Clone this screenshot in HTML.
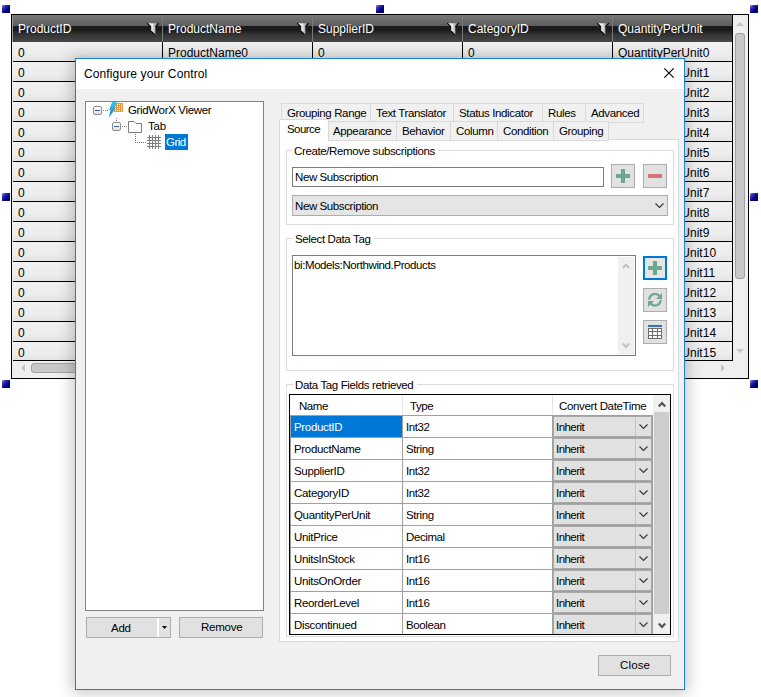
<!DOCTYPE html><html><head><meta charset="utf-8"><style>
*{box-sizing:border-box;margin:0;padding:0}
html,body{width:761px;height:697px;overflow:hidden;background:#fff;font-family:"Liberation Sans",sans-serif}
body{position:relative}
.a{position:absolute}
.t{position:absolute;white-space:pre;line-height:1.15}
.h{position:absolute;width:8px;height:8px;background:linear-gradient(135deg,#a8a8ec 0%,#3838b0 25%,#00008a 60%,#000068 100%)}
svg{position:absolute;overflow:visible}
</style></head><body>
<div class="h" style="left:2px;top:5px"></div>
<div class="h" style="left:376px;top:5px"></div>
<div class="h" style="left:750px;top:5px"></div>
<div class="h" style="left:2px;top:193px"></div>
<div class="h" style="left:750px;top:193px"></div>
<div class="h" style="left:2px;top:380px"></div>
<div class="h" style="left:750px;top:380px"></div>
<div class="a" style="left:11px;top:14px;width:738px;height:365px;border:1px solid #000;background:#efefef"></div>
<div class="a" style="left:12px;top:15px;width:720px;height:27px;background:linear-gradient(#787878 0%,#5e5e5e 39%,#1c1c1c 41%,#1a1a1a 55%,#363636 75%,#474747 100%)"></div>
<div class="a" style="left:162px;top:15px;width:1px;height:27px;background:#7a7a7a"></div>
<div class="a" style="left:312px;top:15px;width:1px;height:27px;background:#7a7a7a"></div>
<div class="a" style="left:462px;top:15px;width:1px;height:27px;background:#7a7a7a"></div>
<div class="a" style="left:612px;top:15px;width:1px;height:27px;background:#7a7a7a"></div>
<div class="a" style="left:732px;top:15px;width:1px;height:346px;background:#000"></div>
<div class="a" style="left:12px;top:15px;width:1px;height:27px;background:#9a9a9a"></div>
<div class="t" style="left:18px;top:23px;font-size:12px;color:#fff;">ProductID</div>
<div class="t" style="left:168px;top:23px;font-size:12px;color:#fff;">ProductName</div>
<div class="t" style="left:318px;top:23px;font-size:12px;color:#fff;">SupplierID</div>
<div class="t" style="left:468px;top:23px;font-size:12px;color:#fff;">CategoryID</div>
<div class="t" style="left:618px;top:23px;font-size:12px;color:#fff;">QuantityPerUnit</div>
<svg style="left:147px;top:22px" width="13" height="14" viewBox="0 0 13 14"><defs><linearGradient id="fg" x1="0" x2="1"><stop offset="0" stop-color="#fff"/><stop offset="0.45" stop-color="#e8e8e8"/><stop offset="1" stop-color="#6a6a6a"/></linearGradient></defs><path d="M0.8 1.2 L11.2 1.2 L8.4 4.6 L8.4 12.6 L7.6 12.6 L4.2 9.2 L4.2 4.6 Z" fill="url(#fg)"/><path d="M0.2 1.2 L3.8 4.7 M11.8 1.2 L8.4 4.7 M4.2 9.2 L7.7 12.7" stroke="#000" stroke-width="1.1" fill="none"/></svg>
<svg style="left:297px;top:22px" width="13" height="14" viewBox="0 0 13 14"><defs><linearGradient id="fg" x1="0" x2="1"><stop offset="0" stop-color="#fff"/><stop offset="0.45" stop-color="#e8e8e8"/><stop offset="1" stop-color="#6a6a6a"/></linearGradient></defs><path d="M0.8 1.2 L11.2 1.2 L8.4 4.6 L8.4 12.6 L7.6 12.6 L4.2 9.2 L4.2 4.6 Z" fill="url(#fg)"/><path d="M0.2 1.2 L3.8 4.7 M11.8 1.2 L8.4 4.7 M4.2 9.2 L7.7 12.7" stroke="#000" stroke-width="1.1" fill="none"/></svg>
<svg style="left:447px;top:22px" width="13" height="14" viewBox="0 0 13 14"><defs><linearGradient id="fg" x1="0" x2="1"><stop offset="0" stop-color="#fff"/><stop offset="0.45" stop-color="#e8e8e8"/><stop offset="1" stop-color="#6a6a6a"/></linearGradient></defs><path d="M0.8 1.2 L11.2 1.2 L8.4 4.6 L8.4 12.6 L7.6 12.6 L4.2 9.2 L4.2 4.6 Z" fill="url(#fg)"/><path d="M0.2 1.2 L3.8 4.7 M11.8 1.2 L8.4 4.7 M4.2 9.2 L7.7 12.7" stroke="#000" stroke-width="1.1" fill="none"/></svg>
<svg style="left:597px;top:22px" width="13" height="14" viewBox="0 0 13 14"><defs><linearGradient id="fg" x1="0" x2="1"><stop offset="0" stop-color="#fff"/><stop offset="0.45" stop-color="#e8e8e8"/><stop offset="1" stop-color="#6a6a6a"/></linearGradient></defs><path d="M0.8 1.2 L11.2 1.2 L8.4 4.6 L8.4 12.6 L7.6 12.6 L4.2 9.2 L4.2 4.6 Z" fill="url(#fg)"/><path d="M0.2 1.2 L3.8 4.7 M11.8 1.2 L8.4 4.7 M4.2 9.2 L7.7 12.7" stroke="#000" stroke-width="1.1" fill="none"/></svg>
<div class="a" style="left:12px;top:42px;width:720px;height:19px;background:linear-gradient(#f1f1f1 0%,#ededed 60%,#e4e4e4 100%)"></div>
<div class="a" style="left:13px;top:61px;width:719px;height:1px;background:#000"></div>
<div class="a" style="left:162px;top:42px;width:1px;height:20px;background:#000"></div>
<div class="a" style="left:312px;top:42px;width:1px;height:20px;background:#000"></div>
<div class="a" style="left:462px;top:42px;width:1px;height:20px;background:#000"></div>
<div class="a" style="left:612px;top:42px;width:1px;height:20px;background:#000"></div>
<div class="t" style="left:18px;top:47px;font-size:12px;color:#000;">0</div>
<div class="t" style="left:168px;top:47px;font-size:12px;color:#000;">ProductName0</div>
<div class="t" style="left:318px;top:47px;font-size:12px;color:#000;">0</div>
<div class="t" style="left:468px;top:47px;font-size:12px;color:#000;">0</div>
<div class="t" style="left:618px;top:47px;font-size:12px;color:#000;">QuantityPerUnit0</div>
<div class="a" style="left:12px;top:62px;width:720px;height:19px;background:linear-gradient(#f1f1f1 0%,#ededed 60%,#e4e4e4 100%)"></div>
<div class="a" style="left:13px;top:81px;width:719px;height:1px;background:#000"></div>
<div class="a" style="left:162px;top:62px;width:1px;height:20px;background:#000"></div>
<div class="a" style="left:312px;top:62px;width:1px;height:20px;background:#000"></div>
<div class="a" style="left:462px;top:62px;width:1px;height:20px;background:#000"></div>
<div class="a" style="left:612px;top:62px;width:1px;height:20px;background:#000"></div>
<div class="t" style="left:18px;top:67px;font-size:12px;color:#000;">0</div>
<div class="t" style="left:168px;top:67px;font-size:12px;color:#000;">ProductName1</div>
<div class="t" style="left:318px;top:67px;font-size:12px;color:#000;">0</div>
<div class="t" style="left:468px;top:67px;font-size:12px;color:#000;">0</div>
<div class="t" style="left:618px;top:67px;font-size:12px;color:#000;">QuantityPerUnit1</div>
<div class="a" style="left:12px;top:82px;width:720px;height:19px;background:linear-gradient(#f1f1f1 0%,#ededed 60%,#e4e4e4 100%)"></div>
<div class="a" style="left:13px;top:101px;width:719px;height:1px;background:#000"></div>
<div class="a" style="left:162px;top:82px;width:1px;height:20px;background:#000"></div>
<div class="a" style="left:312px;top:82px;width:1px;height:20px;background:#000"></div>
<div class="a" style="left:462px;top:82px;width:1px;height:20px;background:#000"></div>
<div class="a" style="left:612px;top:82px;width:1px;height:20px;background:#000"></div>
<div class="t" style="left:18px;top:87px;font-size:12px;color:#000;">0</div>
<div class="t" style="left:168px;top:87px;font-size:12px;color:#000;">ProductName2</div>
<div class="t" style="left:318px;top:87px;font-size:12px;color:#000;">0</div>
<div class="t" style="left:468px;top:87px;font-size:12px;color:#000;">0</div>
<div class="t" style="left:618px;top:87px;font-size:12px;color:#000;">QuantityPerUnit2</div>
<div class="a" style="left:12px;top:102px;width:720px;height:19px;background:linear-gradient(#f1f1f1 0%,#ededed 60%,#e4e4e4 100%)"></div>
<div class="a" style="left:13px;top:121px;width:719px;height:1px;background:#000"></div>
<div class="a" style="left:162px;top:102px;width:1px;height:20px;background:#000"></div>
<div class="a" style="left:312px;top:102px;width:1px;height:20px;background:#000"></div>
<div class="a" style="left:462px;top:102px;width:1px;height:20px;background:#000"></div>
<div class="a" style="left:612px;top:102px;width:1px;height:20px;background:#000"></div>
<div class="t" style="left:18px;top:107px;font-size:12px;color:#000;">0</div>
<div class="t" style="left:168px;top:107px;font-size:12px;color:#000;">ProductName3</div>
<div class="t" style="left:318px;top:107px;font-size:12px;color:#000;">0</div>
<div class="t" style="left:468px;top:107px;font-size:12px;color:#000;">0</div>
<div class="t" style="left:618px;top:107px;font-size:12px;color:#000;">QuantityPerUnit3</div>
<div class="a" style="left:12px;top:122px;width:720px;height:19px;background:linear-gradient(#f1f1f1 0%,#ededed 60%,#e4e4e4 100%)"></div>
<div class="a" style="left:13px;top:141px;width:719px;height:1px;background:#000"></div>
<div class="a" style="left:162px;top:122px;width:1px;height:20px;background:#000"></div>
<div class="a" style="left:312px;top:122px;width:1px;height:20px;background:#000"></div>
<div class="a" style="left:462px;top:122px;width:1px;height:20px;background:#000"></div>
<div class="a" style="left:612px;top:122px;width:1px;height:20px;background:#000"></div>
<div class="t" style="left:18px;top:127px;font-size:12px;color:#000;">0</div>
<div class="t" style="left:168px;top:127px;font-size:12px;color:#000;">ProductName4</div>
<div class="t" style="left:318px;top:127px;font-size:12px;color:#000;">0</div>
<div class="t" style="left:468px;top:127px;font-size:12px;color:#000;">0</div>
<div class="t" style="left:618px;top:127px;font-size:12px;color:#000;">QuantityPerUnit4</div>
<div class="a" style="left:12px;top:142px;width:720px;height:19px;background:linear-gradient(#f1f1f1 0%,#ededed 60%,#e4e4e4 100%)"></div>
<div class="a" style="left:13px;top:161px;width:719px;height:1px;background:#000"></div>
<div class="a" style="left:162px;top:142px;width:1px;height:20px;background:#000"></div>
<div class="a" style="left:312px;top:142px;width:1px;height:20px;background:#000"></div>
<div class="a" style="left:462px;top:142px;width:1px;height:20px;background:#000"></div>
<div class="a" style="left:612px;top:142px;width:1px;height:20px;background:#000"></div>
<div class="t" style="left:18px;top:147px;font-size:12px;color:#000;">0</div>
<div class="t" style="left:168px;top:147px;font-size:12px;color:#000;">ProductName5</div>
<div class="t" style="left:318px;top:147px;font-size:12px;color:#000;">0</div>
<div class="t" style="left:468px;top:147px;font-size:12px;color:#000;">0</div>
<div class="t" style="left:618px;top:147px;font-size:12px;color:#000;">QuantityPerUnit5</div>
<div class="a" style="left:12px;top:162px;width:720px;height:19px;background:linear-gradient(#f1f1f1 0%,#ededed 60%,#e4e4e4 100%)"></div>
<div class="a" style="left:13px;top:181px;width:719px;height:1px;background:#000"></div>
<div class="a" style="left:162px;top:162px;width:1px;height:20px;background:#000"></div>
<div class="a" style="left:312px;top:162px;width:1px;height:20px;background:#000"></div>
<div class="a" style="left:462px;top:162px;width:1px;height:20px;background:#000"></div>
<div class="a" style="left:612px;top:162px;width:1px;height:20px;background:#000"></div>
<div class="t" style="left:18px;top:167px;font-size:12px;color:#000;">0</div>
<div class="t" style="left:168px;top:167px;font-size:12px;color:#000;">ProductName6</div>
<div class="t" style="left:318px;top:167px;font-size:12px;color:#000;">0</div>
<div class="t" style="left:468px;top:167px;font-size:12px;color:#000;">0</div>
<div class="t" style="left:618px;top:167px;font-size:12px;color:#000;">QuantityPerUnit6</div>
<div class="a" style="left:12px;top:182px;width:720px;height:19px;background:linear-gradient(#f1f1f1 0%,#ededed 60%,#e4e4e4 100%)"></div>
<div class="a" style="left:13px;top:201px;width:719px;height:1px;background:#000"></div>
<div class="a" style="left:162px;top:182px;width:1px;height:20px;background:#000"></div>
<div class="a" style="left:312px;top:182px;width:1px;height:20px;background:#000"></div>
<div class="a" style="left:462px;top:182px;width:1px;height:20px;background:#000"></div>
<div class="a" style="left:612px;top:182px;width:1px;height:20px;background:#000"></div>
<div class="t" style="left:18px;top:187px;font-size:12px;color:#000;">0</div>
<div class="t" style="left:168px;top:187px;font-size:12px;color:#000;">ProductName7</div>
<div class="t" style="left:318px;top:187px;font-size:12px;color:#000;">0</div>
<div class="t" style="left:468px;top:187px;font-size:12px;color:#000;">0</div>
<div class="t" style="left:618px;top:187px;font-size:12px;color:#000;">QuantityPerUnit7</div>
<div class="a" style="left:12px;top:202px;width:720px;height:19px;background:linear-gradient(#f1f1f1 0%,#ededed 60%,#e4e4e4 100%)"></div>
<div class="a" style="left:13px;top:221px;width:719px;height:1px;background:#000"></div>
<div class="a" style="left:162px;top:202px;width:1px;height:20px;background:#000"></div>
<div class="a" style="left:312px;top:202px;width:1px;height:20px;background:#000"></div>
<div class="a" style="left:462px;top:202px;width:1px;height:20px;background:#000"></div>
<div class="a" style="left:612px;top:202px;width:1px;height:20px;background:#000"></div>
<div class="t" style="left:18px;top:207px;font-size:12px;color:#000;">0</div>
<div class="t" style="left:168px;top:207px;font-size:12px;color:#000;">ProductName8</div>
<div class="t" style="left:318px;top:207px;font-size:12px;color:#000;">0</div>
<div class="t" style="left:468px;top:207px;font-size:12px;color:#000;">0</div>
<div class="t" style="left:618px;top:207px;font-size:12px;color:#000;">QuantityPerUnit8</div>
<div class="a" style="left:12px;top:222px;width:720px;height:19px;background:linear-gradient(#f1f1f1 0%,#ededed 60%,#e4e4e4 100%)"></div>
<div class="a" style="left:13px;top:241px;width:719px;height:1px;background:#000"></div>
<div class="a" style="left:162px;top:222px;width:1px;height:20px;background:#000"></div>
<div class="a" style="left:312px;top:222px;width:1px;height:20px;background:#000"></div>
<div class="a" style="left:462px;top:222px;width:1px;height:20px;background:#000"></div>
<div class="a" style="left:612px;top:222px;width:1px;height:20px;background:#000"></div>
<div class="t" style="left:18px;top:227px;font-size:12px;color:#000;">0</div>
<div class="t" style="left:168px;top:227px;font-size:12px;color:#000;">ProductName9</div>
<div class="t" style="left:318px;top:227px;font-size:12px;color:#000;">0</div>
<div class="t" style="left:468px;top:227px;font-size:12px;color:#000;">0</div>
<div class="t" style="left:618px;top:227px;font-size:12px;color:#000;">QuantityPerUnit9</div>
<div class="a" style="left:12px;top:242px;width:720px;height:19px;background:linear-gradient(#f1f1f1 0%,#ededed 60%,#e4e4e4 100%)"></div>
<div class="a" style="left:13px;top:261px;width:719px;height:1px;background:#000"></div>
<div class="a" style="left:162px;top:242px;width:1px;height:20px;background:#000"></div>
<div class="a" style="left:312px;top:242px;width:1px;height:20px;background:#000"></div>
<div class="a" style="left:462px;top:242px;width:1px;height:20px;background:#000"></div>
<div class="a" style="left:612px;top:242px;width:1px;height:20px;background:#000"></div>
<div class="t" style="left:18px;top:247px;font-size:12px;color:#000;">0</div>
<div class="t" style="left:168px;top:247px;font-size:12px;color:#000;">ProductName10</div>
<div class="t" style="left:318px;top:247px;font-size:12px;color:#000;">0</div>
<div class="t" style="left:468px;top:247px;font-size:12px;color:#000;">0</div>
<div class="t" style="left:618px;top:247px;font-size:12px;color:#000;">QuantityPerUnit10</div>
<div class="a" style="left:12px;top:262px;width:720px;height:19px;background:linear-gradient(#f1f1f1 0%,#ededed 60%,#e4e4e4 100%)"></div>
<div class="a" style="left:13px;top:281px;width:719px;height:1px;background:#000"></div>
<div class="a" style="left:162px;top:262px;width:1px;height:20px;background:#000"></div>
<div class="a" style="left:312px;top:262px;width:1px;height:20px;background:#000"></div>
<div class="a" style="left:462px;top:262px;width:1px;height:20px;background:#000"></div>
<div class="a" style="left:612px;top:262px;width:1px;height:20px;background:#000"></div>
<div class="t" style="left:18px;top:267px;font-size:12px;color:#000;">0</div>
<div class="t" style="left:168px;top:267px;font-size:12px;color:#000;">ProductName11</div>
<div class="t" style="left:318px;top:267px;font-size:12px;color:#000;">0</div>
<div class="t" style="left:468px;top:267px;font-size:12px;color:#000;">0</div>
<div class="t" style="left:618px;top:267px;font-size:12px;color:#000;">QuantityPerUnit11</div>
<div class="a" style="left:12px;top:282px;width:720px;height:19px;background:linear-gradient(#f1f1f1 0%,#ededed 60%,#e4e4e4 100%)"></div>
<div class="a" style="left:13px;top:301px;width:719px;height:1px;background:#000"></div>
<div class="a" style="left:162px;top:282px;width:1px;height:20px;background:#000"></div>
<div class="a" style="left:312px;top:282px;width:1px;height:20px;background:#000"></div>
<div class="a" style="left:462px;top:282px;width:1px;height:20px;background:#000"></div>
<div class="a" style="left:612px;top:282px;width:1px;height:20px;background:#000"></div>
<div class="t" style="left:18px;top:287px;font-size:12px;color:#000;">0</div>
<div class="t" style="left:168px;top:287px;font-size:12px;color:#000;">ProductName12</div>
<div class="t" style="left:318px;top:287px;font-size:12px;color:#000;">0</div>
<div class="t" style="left:468px;top:287px;font-size:12px;color:#000;">0</div>
<div class="t" style="left:618px;top:287px;font-size:12px;color:#000;">QuantityPerUnit12</div>
<div class="a" style="left:12px;top:302px;width:720px;height:19px;background:linear-gradient(#f1f1f1 0%,#ededed 60%,#e4e4e4 100%)"></div>
<div class="a" style="left:13px;top:321px;width:719px;height:1px;background:#000"></div>
<div class="a" style="left:162px;top:302px;width:1px;height:20px;background:#000"></div>
<div class="a" style="left:312px;top:302px;width:1px;height:20px;background:#000"></div>
<div class="a" style="left:462px;top:302px;width:1px;height:20px;background:#000"></div>
<div class="a" style="left:612px;top:302px;width:1px;height:20px;background:#000"></div>
<div class="t" style="left:18px;top:307px;font-size:12px;color:#000;">0</div>
<div class="t" style="left:168px;top:307px;font-size:12px;color:#000;">ProductName13</div>
<div class="t" style="left:318px;top:307px;font-size:12px;color:#000;">0</div>
<div class="t" style="left:468px;top:307px;font-size:12px;color:#000;">0</div>
<div class="t" style="left:618px;top:307px;font-size:12px;color:#000;">QuantityPerUnit13</div>
<div class="a" style="left:12px;top:322px;width:720px;height:19px;background:linear-gradient(#f1f1f1 0%,#ededed 60%,#e4e4e4 100%)"></div>
<div class="a" style="left:13px;top:341px;width:719px;height:1px;background:#000"></div>
<div class="a" style="left:162px;top:322px;width:1px;height:20px;background:#000"></div>
<div class="a" style="left:312px;top:322px;width:1px;height:20px;background:#000"></div>
<div class="a" style="left:462px;top:322px;width:1px;height:20px;background:#000"></div>
<div class="a" style="left:612px;top:322px;width:1px;height:20px;background:#000"></div>
<div class="t" style="left:18px;top:327px;font-size:12px;color:#000;">0</div>
<div class="t" style="left:168px;top:327px;font-size:12px;color:#000;">ProductName14</div>
<div class="t" style="left:318px;top:327px;font-size:12px;color:#000;">0</div>
<div class="t" style="left:468px;top:327px;font-size:12px;color:#000;">0</div>
<div class="t" style="left:618px;top:327px;font-size:12px;color:#000;">QuantityPerUnit14</div>
<div class="a" style="left:12px;top:342px;width:720px;height:18px;background:linear-gradient(#f1f1f1 0%,#ededed 60%,#e4e4e4 100%)"></div>
<div class="a" style="left:13px;top:360px;width:719px;height:1px;background:#000"></div>
<div class="a" style="left:162px;top:342px;width:1px;height:19px;background:#000"></div>
<div class="a" style="left:312px;top:342px;width:1px;height:19px;background:#000"></div>
<div class="a" style="left:462px;top:342px;width:1px;height:19px;background:#000"></div>
<div class="a" style="left:612px;top:342px;width:1px;height:19px;background:#000"></div>
<div class="t" style="left:18px;top:347px;font-size:12px;color:#000;">0</div>
<div class="t" style="left:168px;top:347px;font-size:12px;color:#000;">ProductName15</div>
<div class="t" style="left:318px;top:347px;font-size:12px;color:#000;">0</div>
<div class="t" style="left:468px;top:347px;font-size:12px;color:#000;">0</div>
<div class="t" style="left:618px;top:347px;font-size:12px;color:#000;">QuantityPerUnit15</div>
<div class="a" style="left:733px;top:15px;width:15px;height:347px;background:#efefef"></div>
<svg style="left:736px;top:21px" width="8" height="5"><path d="M0 5 L4 1 L8 5 Z" fill="#c6c6c6"/></svg>
<div class="a" style="left:735px;top:33px;width:10px;height:246px;background:#c8c8c8;border:1px solid #a0a0a0;border-radius:3px"></div>
<svg style="left:736px;top:349px" width="8" height="5"><path d="M0 0 L4 4 L8 0 Z" fill="#c6c6c6"/></svg>
<div class="a" style="left:12px;top:361px;width:721px;height:17px;background:#efefef"></div>
<svg style="left:20px;top:364px" width="5" height="8"><path d="M5 0 L1 4 L5 8 Z" fill="#c6c6c6"/></svg>
<div class="a" style="left:31px;top:363px;width:600px;height:10px;background:#c8c8c8;border:1px solid #a0a0a0;border-radius:3px"></div>
<svg style="left:721px;top:364px" width="5" height="8"><path d="M0 0 L4 4 L0 8 Z" fill="#c6c6c6"/></svg>
<div class="a" style="left:733px;top:361px;width:15px;height:17px;background:#efefef"></div>
<div class="a" style="left:75px;top:59px;width:610px;height:631px;box-shadow:0 0 14px 3px rgba(0,0,0,0.22)"></div>
<div class="a" style="left:75px;top:58px;width:610px;height:632px;border:1px solid #1883d7;background:#f0f0f0"></div>
<div class="a" style="left:76px;top:59px;width:608px;height:30px;background:#fff"></div>
<div class="t" style="left:84px;top:68px;font-size:12px;color:#000;letter-spacing:0.12px;">Configure your Control</div>
<svg style="left:664px;top:68px" width="11" height="11"><path d="M0.3 0.3 L9.7 9.7 M9.7 0.3 L0.3 9.7" stroke="#000" stroke-width="1.15"/></svg>
<div class="a" style="left:85px;top:101px;width:179px;height:510px;border:1px solid #828282;background:#fff"></div>
<div class="a" style="left:93px;top:106px;width:9px;height:9px;border:1px solid #8e8f8f;border-radius:2px;background:linear-gradient(#fff,#f0f0f0 60%,#dcdcdc)"></div>
<div class="a" style="left:95px;top:110px;width:5px;height:1px;background:#3b5aa5"></div>
<div class="a" style="left:103px;top:110px;width:1px;height:1px;background:#7a7a7a"></div>
<div class="a" style="left:105px;top:110px;width:1px;height:1px;background:#7a7a7a"></div>
<div class="a" style="left:107px;top:110px;width:1px;height:1px;background:#7a7a7a"></div>
<svg style="left:108px;top:102px" width="16" height="16" viewBox="0 0 16 16"><rect x="6" y="1" width="9" height="9" fill="#e9973f"/><g fill="#fff"><rect x="7" y="2" width="1" height="1"/><rect x="9" y="2" width="1" height="1"/><rect x="11" y="2" width="1" height="1"/><rect x="13" y="2" width="1" height="1"/><rect x="7" y="4" width="1" height="1"/><rect x="9" y="4" width="1" height="1"/><rect x="11" y="4" width="1" height="1"/><rect x="13" y="4" width="1" height="1"/><rect x="7" y="6" width="1" height="1"/><rect x="9" y="6" width="1" height="1"/><rect x="11" y="6" width="1" height="1"/><rect x="13" y="6" width="1" height="1"/><rect x="7" y="8" width="1" height="1"/><rect x="9" y="8" width="1" height="1"/><rect x="11" y="8" width="1" height="1"/><rect x="13" y="8" width="1" height="1"/></g><defs><linearGradient id="lg" x1="0" y1="0" x2="0" y2="1"><stop offset="0" stop-color="#3cc8f5"/><stop offset="1" stop-color="#0a7fd0"/></linearGradient></defs><path d="M4 0 L9 0 L6.5 6.5 L7.5 6.5 L1 15.5 L2.5 8 L1.2 8 Z" fill="url(#lg)"/></svg>
<div class="t" style="left:128px;top:104px;font-size:11.5px;color:#000;letter-spacing:-0.35px;">GridWorX Viewer</div>
<div class="a" style="left:116px;top:118px;width:1px;height:1px;background:#7a7a7a"></div>
<div class="a" style="left:116px;top:120px;width:1px;height:1px;background:#7a7a7a"></div>
<div class="a" style="left:112px;top:122px;width:9px;height:9px;border:1px solid #8e8f8f;border-radius:2px;background:linear-gradient(#fff,#f0f0f0 60%,#dcdcdc)"></div>
<div class="a" style="left:114px;top:126px;width:5px;height:1px;background:#3b5aa5"></div>
<div class="a" style="left:122px;top:126px;width:1px;height:1px;background:#7a7a7a"></div>
<div class="a" style="left:124px;top:126px;width:1px;height:1px;background:#7a7a7a"></div>
<div class="a" style="left:126px;top:126px;width:1px;height:1px;background:#7a7a7a"></div>
<svg style="left:128px;top:121px" width="15" height="13" viewBox="0 0 15 13"><path d="M0.5 0.5 L6 0.5 L8 2.5 L13.5 2.5 L13.5 11.5 L0.5 11.5 Z" fill="#fff" stroke="#7a7a7a" stroke-width="1"/></svg>
<div class="t" style="left:148px;top:120px;font-size:11.5px;color:#000;letter-spacing:-0.25px;">Tab</div>
<div class="a" style="left:135px;top:134px;width:1px;height:1px;background:#7a7a7a"></div>
<div class="a" style="left:135px;top:136px;width:1px;height:1px;background:#7a7a7a"></div>
<div class="a" style="left:135px;top:138px;width:1px;height:1px;background:#7a7a7a"></div>
<div class="a" style="left:135px;top:140px;width:1px;height:1px;background:#7a7a7a"></div>
<div class="a" style="left:135px;top:142px;width:1px;height:1px;background:#7a7a7a"></div>
<div class="a" style="left:137px;top:142px;width:1px;height:1px;background:#7a7a7a"></div>
<div class="a" style="left:139px;top:142px;width:1px;height:1px;background:#7a7a7a"></div>
<div class="a" style="left:141px;top:142px;width:1px;height:1px;background:#7a7a7a"></div>
<div class="a" style="left:143px;top:142px;width:1px;height:1px;background:#7a7a7a"></div>
<div class="a" style="left:145px;top:142px;width:1px;height:1px;background:#7a7a7a"></div>
<svg style="left:147px;top:135px" width="14" height="14" viewBox="0 0 14 14"><g stroke="#7b7f7f" stroke-width="1"><path d="M2.5 0 V14 M5.5 0 V14 M8.5 0 V14 M11.5 0 V14"/><path d="M0 2.5 H14 M0 5.5 H14 M0 8.5 H14 M0 11.5 H14"/></g></svg>
<div class="a" style="left:165px;top:134px;width:23px;height:16px;background:#0078d7"></div>
<div class="t" style="left:166px;top:136px;font-size:11.5px;color:#fff;letter-spacing:-0.55px;">Grid</div>
<div class="a" style="left:86px;top:617px;width:85px;height:21px;border:1px solid #adadad;background:#e1e1e1"></div>
<div class="a" style="left:157px;top:618px;width:2px;height:19px;background:#fff"></div>
<svg style="left:162px;top:626px" width="5" height="3"><path d="M0 0 L5 0 L2.5 3 Z" fill="#000"/></svg>
<div class="t" style="left:111px;top:622px;font-size:11.5px;color:#000;letter-spacing:-0.25px;">Add</div>
<div class="a" style="left:179px;top:617px;width:84px;height:21px;border:1px solid #adadad;background:#e1e1e1"></div>
<div class="t" style="left:201px;top:621px;font-size:11.5px;color:#000;letter-spacing:-0.25px;">Remove</div>
<div class="a" style="left:281px;top:103px;width:90px;height:20px;border:1px solid #d9d9d9;background:#f0f0f0"></div>
<div class="t" style="left:287px;top:107px;font-size:11.5px;color:#000;letter-spacing:-0.37px;">Grouping Range</div>
<div class="a" style="left:370px;top:103px;width:84px;height:20px;border:1px solid #d9d9d9;background:#f0f0f0"></div>
<div class="t" style="left:376px;top:107px;font-size:11.5px;color:#000;letter-spacing:-0.37px;">Text Translator</div>
<div class="a" style="left:453px;top:103px;width:90px;height:20px;border:1px solid #d9d9d9;background:#f0f0f0"></div>
<div class="t" style="left:459px;top:107px;font-size:11.5px;color:#000;letter-spacing:-0.37px;">Status Indicator</div>
<div class="a" style="left:542px;top:103px;width:44px;height:20px;border:1px solid #d9d9d9;background:#f0f0f0"></div>
<div class="t" style="left:548px;top:107px;font-size:11.5px;color:#000;letter-spacing:-0.37px;">Rules</div>
<div class="a" style="left:585px;top:103px;width:59px;height:20px;border:1px solid #d9d9d9;background:#f0f0f0"></div>
<div class="t" style="left:591px;top:107px;font-size:11.5px;color:#000;letter-spacing:-0.37px;">Advanced</div>
<div class="a" style="left:279px;top:139px;width:400px;height:503px;border:1px solid #d9d9d9;background:#fff"></div>
<div class="a" style="left:328px;top:121px;width:69px;height:20px;border:1px solid #d9d9d9;background:#f0f0f0"></div>
<div class="t" style="left:333px;top:125px;font-size:11.5px;color:#000;letter-spacing:-0.37px;">Appearance</div>
<div class="a" style="left:396px;top:121px;width:55px;height:20px;border:1px solid #d9d9d9;background:#f0f0f0"></div>
<div class="t" style="left:402px;top:125px;font-size:11.5px;color:#000;letter-spacing:-0.37px;">Behavior</div>
<div class="a" style="left:450px;top:121px;width:48px;height:20px;border:1px solid #d9d9d9;background:#f0f0f0"></div>
<div class="t" style="left:456px;top:125px;font-size:11.5px;color:#000;letter-spacing:-0.37px;">Column</div>
<div class="a" style="left:497px;top:121px;width:57px;height:20px;border:1px solid #d9d9d9;background:#f0f0f0"></div>
<div class="t" style="left:503px;top:125px;font-size:11.5px;color:#000;letter-spacing:-0.37px;">Condition</div>
<div class="a" style="left:553px;top:121px;width:56px;height:20px;border:1px solid #d9d9d9;background:#f0f0f0"></div>
<div class="t" style="left:559px;top:125px;font-size:11.5px;color:#000;letter-spacing:-0.37px;">Grouping</div>
<div class="a" style="left:279px;top:119px;width:50px;height:22px;border:1px solid #d9d9d9;border-bottom:none;background:#fff"></div>
<div class="t" style="left:287px;top:123px;font-size:11.5px;color:#000;letter-spacing:-0.55px;">Source</div>
<div class="a" style="left:286px;top:150px;width:388px;height:75px;border:1px solid #dcdcdc"></div>
<div class="a" style="left:292px;top:148px;width:146px;height:4px;background:#fff"></div>
<div class="t" style="left:294px;top:145px;font-size:11.5px;color:#000;letter-spacing:-0.37px;">Create/Remove subscriptions</div>
<div class="a" style="left:292px;top:167px;width:312px;height:20px;border:1px solid #7a7a7a;background:#fff"></div>
<div class="t" style="left:295px;top:171px;font-size:11.5px;color:#000;letter-spacing:-0.4px;">New Subscription</div>
<div class="a" style="left:611px;top:164px;width:24px;height:24px;border:1px solid #adadad;background:#e1e1e1"></div>
<div class="a" style="left:616px;top:174px;width:14px;height:4px;background:#6aa98f"></div>
<div class="a" style="left:621px;top:169px;width:4px;height:14px;background:#6aa98f"></div>
<div class="a" style="left:643px;top:164px;width:24px;height:24px;border:1px solid #adadad;background:#e1e1e1"></div>
<div class="a" style="left:648px;top:174px;width:14px;height:4px;background:#d9727a"></div>
<div class="a" style="left:292px;top:195px;width:376px;height:21px;border:1px solid #adadad;background:#e5e5e5"></div>
<div class="t" style="left:295px;top:200px;font-size:11.5px;color:#000;letter-spacing:-0.4px;">New Subscription</div>
<svg style="left:655px;top:203px" width="9" height="6"><path d="M0.5 0.5 L4.5 4.5 L8.5 0.5" fill="none" stroke="#3a3a3a" stroke-width="1.2"/></svg>
<div class="a" style="left:286px;top:238px;width:388px;height:133px;border:1px solid #dcdcdc"></div>
<div class="a" style="left:293px;top:236px;width:81px;height:4px;background:#fff"></div>
<div class="t" style="left:295px;top:233px;font-size:11.5px;color:#000;letter-spacing:-0.37px;">Select Data Tag</div>
<div class="a" style="left:292px;top:255px;width:344px;height:101px;border:1px solid #7a7a7a;background:#fff"></div>
<div class="t" style="left:294px;top:259px;font-size:11.5px;color:#000;letter-spacing:-0.4px;">bi:Models:Northwind.Products</div>
<div class="a" style="left:618px;top:257px;width:16px;height:97px;background:#f0f0f0"></div>
<svg style="left:622px;top:262px" width="8" height="8"><path d="M0.8 6 L4 2.6 L7.2 6" fill="none" stroke="#c0c0c0" stroke-width="2"/></svg>
<svg style="left:622px;top:342px" width="8" height="8"><path d="M0.8 1.5 L4 5 L7.2 1.5" fill="none" stroke="#c0c0c0" stroke-width="2"/></svg>
<div class="a" style="left:643px;top:256px;width:24px;height:24px;border:2px solid #0078d7;background:#e5e5e5"></div>
<div class="a" style="left:648px;top:266px;width:14px;height:4px;background:#6aa98f"></div>
<div class="a" style="left:653px;top:261px;width:4px;height:14px;background:#6aa98f"></div>
<div class="a" style="left:643px;top:288px;width:24px;height:24px;border:1px solid #adadad;background:#e1e1e1"></div>
<svg style="left:647px;top:292px" width="16" height="16" viewBox="0 0 16 16"><g fill="none" stroke="#70a893" stroke-width="2.3"><path d="M2.3 7.9 A5.7 5.7 0 0 1 12.4 4.1"/><path d="M13.7 8.1 A5.7 5.7 0 0 1 3.6 11.4"/></g><path d="M15 1 L15 7 L9 7 Z" fill="#70a893"/><path d="M1 15 L1 9 L7 9 Z" fill="#70a893"/></svg>
<div class="a" style="left:643px;top:320px;width:24px;height:24px;border:1px solid #adadad;background:#e1e1e1"></div>
<div class="a" style="left:648px;top:325px;width:14px;height:2px;background:#3d6fb6"></div>
<div class="a" style="left:648px;top:328px;width:14px;height:11px;border:1px solid #6e6e6e;background:#fff"></div>
<div class="a" style="left:652px;top:328px;width:1px;height:11px;background:#6e6e6e"></div>
<div class="a" style="left:657px;top:328px;width:1px;height:11px;background:#6e6e6e"></div>
<div class="a" style="left:648px;top:331px;width:14px;height:1px;background:#6e6e6e"></div>
<div class="a" style="left:648px;top:335px;width:14px;height:1px;background:#6e6e6e"></div>
<div class="a" style="left:286px;top:384px;width:388px;height:253px;border:1px solid #dcdcdc"></div>
<div class="a" style="left:293px;top:382px;width:124px;height:4px;background:#fff"></div>
<div class="t" style="left:295px;top:379px;font-size:11.5px;color:#000;letter-spacing:-0.37px;">Data Tag Fields retrieved</div>
<div class="a" style="left:289px;top:394px;width:382px;height:241px;border:1px solid #000;background:#fff"></div>
<div class="a" style="left:290px;top:395px;width:363px;height:20px;background:#fff"></div>
<div class="a" style="left:402px;top:395px;width:1px;height:20px;background:#e5e5e5"></div>
<div class="a" style="left:552px;top:395px;width:1px;height:20px;background:#e5e5e5"></div>
<div class="t" style="left:299px;top:400px;font-size:11.5px;color:#000;letter-spacing:-0.45px;">Name</div>
<div class="t" style="left:410px;top:400px;font-size:11.5px;color:#000;letter-spacing:-0.45px;">Type</div>
<div class="t" style="left:559px;top:400px;font-size:11.5px;color:#000;letter-spacing:-0.35px;">Convert DateTime</div>
<div class="a" style="left:290px;top:415px;width:363px;height:1px;background:#a0a0a0"></div>
<div class="a" style="left:291px;top:416px;width:111px;height:21px;background:#0078d7"></div>
<div class="a" style="left:290px;top:416px;width:1px;height:21px;background:#a0a0a0"></div>
<div class="a" style="left:402px;top:416px;width:1px;height:21px;background:#a0a0a0"></div>
<div class="a" style="left:552px;top:416px;width:1px;height:21px;background:#a0a0a0"></div>
<div class="a" style="left:290px;top:437px;width:363px;height:1px;background:#a0a0a0"></div>
<div class="t" style="left:294px;top:421px;font-size:11.5px;color:#fff;letter-spacing:-0.33px;">ProductID</div>
<div class="t" style="left:406px;top:421px;font-size:11.5px;color:#000;letter-spacing:-0.4px;">Int32</div>
<div class="a" style="left:553px;top:416px;width:99px;height:21px;border:1px solid #a8a8a8;background:#e1e1e1"></div>
<div class="a" style="left:652px;top:416px;width:1px;height:21px;background:#a0a0a0"></div>
<div class="a" style="left:635px;top:417px;width:1px;height:19px;background:#c4c4c4"></div>
<div class="t" style="left:556px;top:421px;font-size:11.5px;color:#000;letter-spacing:-0.55px;">Inherit</div>
<svg style="left:639px;top:424px" width="9" height="6"><path d="M0.5 0.5 L4.5 4.5 L8.5 0.5" fill="none" stroke="#3a3a3a" stroke-width="1.2"/></svg>
<div class="a" style="left:290px;top:438px;width:1px;height:21px;background:#a0a0a0"></div>
<div class="a" style="left:402px;top:438px;width:1px;height:21px;background:#a0a0a0"></div>
<div class="a" style="left:552px;top:438px;width:1px;height:21px;background:#a0a0a0"></div>
<div class="a" style="left:290px;top:459px;width:363px;height:1px;background:#a0a0a0"></div>
<div class="t" style="left:294px;top:443px;font-size:11.5px;color:#000;letter-spacing:-0.33px;">ProductName</div>
<div class="t" style="left:406px;top:443px;font-size:11.5px;color:#000;letter-spacing:-0.4px;">String</div>
<div class="a" style="left:553px;top:438px;width:99px;height:21px;border:1px solid #a8a8a8;background:#e1e1e1"></div>
<div class="a" style="left:652px;top:438px;width:1px;height:21px;background:#a0a0a0"></div>
<div class="a" style="left:635px;top:439px;width:1px;height:19px;background:#c4c4c4"></div>
<div class="t" style="left:556px;top:443px;font-size:11.5px;color:#000;letter-spacing:-0.55px;">Inherit</div>
<svg style="left:639px;top:446px" width="9" height="6"><path d="M0.5 0.5 L4.5 4.5 L8.5 0.5" fill="none" stroke="#3a3a3a" stroke-width="1.2"/></svg>
<div class="a" style="left:290px;top:460px;width:1px;height:21px;background:#a0a0a0"></div>
<div class="a" style="left:402px;top:460px;width:1px;height:21px;background:#a0a0a0"></div>
<div class="a" style="left:552px;top:460px;width:1px;height:21px;background:#a0a0a0"></div>
<div class="a" style="left:290px;top:481px;width:363px;height:1px;background:#a0a0a0"></div>
<div class="t" style="left:294px;top:465px;font-size:11.5px;color:#000;letter-spacing:-0.33px;">SupplierID</div>
<div class="t" style="left:406px;top:465px;font-size:11.5px;color:#000;letter-spacing:-0.4px;">Int32</div>
<div class="a" style="left:553px;top:460px;width:99px;height:21px;border:1px solid #a8a8a8;background:#e1e1e1"></div>
<div class="a" style="left:652px;top:460px;width:1px;height:21px;background:#a0a0a0"></div>
<div class="a" style="left:635px;top:461px;width:1px;height:19px;background:#c4c4c4"></div>
<div class="t" style="left:556px;top:465px;font-size:11.5px;color:#000;letter-spacing:-0.55px;">Inherit</div>
<svg style="left:639px;top:468px" width="9" height="6"><path d="M0.5 0.5 L4.5 4.5 L8.5 0.5" fill="none" stroke="#3a3a3a" stroke-width="1.2"/></svg>
<div class="a" style="left:290px;top:482px;width:1px;height:21px;background:#a0a0a0"></div>
<div class="a" style="left:402px;top:482px;width:1px;height:21px;background:#a0a0a0"></div>
<div class="a" style="left:552px;top:482px;width:1px;height:21px;background:#a0a0a0"></div>
<div class="a" style="left:290px;top:503px;width:363px;height:1px;background:#a0a0a0"></div>
<div class="t" style="left:294px;top:487px;font-size:11.5px;color:#000;letter-spacing:-0.33px;">CategoryID</div>
<div class="t" style="left:406px;top:487px;font-size:11.5px;color:#000;letter-spacing:-0.4px;">Int32</div>
<div class="a" style="left:553px;top:482px;width:99px;height:21px;border:1px solid #a8a8a8;background:#e1e1e1"></div>
<div class="a" style="left:652px;top:482px;width:1px;height:21px;background:#a0a0a0"></div>
<div class="a" style="left:635px;top:483px;width:1px;height:19px;background:#c4c4c4"></div>
<div class="t" style="left:556px;top:487px;font-size:11.5px;color:#000;letter-spacing:-0.55px;">Inherit</div>
<svg style="left:639px;top:490px" width="9" height="6"><path d="M0.5 0.5 L4.5 4.5 L8.5 0.5" fill="none" stroke="#3a3a3a" stroke-width="1.2"/></svg>
<div class="a" style="left:290px;top:504px;width:1px;height:21px;background:#a0a0a0"></div>
<div class="a" style="left:402px;top:504px;width:1px;height:21px;background:#a0a0a0"></div>
<div class="a" style="left:552px;top:504px;width:1px;height:21px;background:#a0a0a0"></div>
<div class="a" style="left:290px;top:525px;width:363px;height:1px;background:#a0a0a0"></div>
<div class="t" style="left:294px;top:509px;font-size:11.5px;color:#000;letter-spacing:-0.33px;">QuantityPerUnit</div>
<div class="t" style="left:406px;top:509px;font-size:11.5px;color:#000;letter-spacing:-0.4px;">String</div>
<div class="a" style="left:553px;top:504px;width:99px;height:21px;border:1px solid #a8a8a8;background:#e1e1e1"></div>
<div class="a" style="left:652px;top:504px;width:1px;height:21px;background:#a0a0a0"></div>
<div class="a" style="left:635px;top:505px;width:1px;height:19px;background:#c4c4c4"></div>
<div class="t" style="left:556px;top:509px;font-size:11.5px;color:#000;letter-spacing:-0.55px;">Inherit</div>
<svg style="left:639px;top:512px" width="9" height="6"><path d="M0.5 0.5 L4.5 4.5 L8.5 0.5" fill="none" stroke="#3a3a3a" stroke-width="1.2"/></svg>
<div class="a" style="left:290px;top:526px;width:1px;height:21px;background:#a0a0a0"></div>
<div class="a" style="left:402px;top:526px;width:1px;height:21px;background:#a0a0a0"></div>
<div class="a" style="left:552px;top:526px;width:1px;height:21px;background:#a0a0a0"></div>
<div class="a" style="left:290px;top:547px;width:363px;height:1px;background:#a0a0a0"></div>
<div class="t" style="left:294px;top:531px;font-size:11.5px;color:#000;letter-spacing:-0.33px;">UnitPrice</div>
<div class="t" style="left:406px;top:531px;font-size:11.5px;color:#000;letter-spacing:-0.4px;">Decimal</div>
<div class="a" style="left:553px;top:526px;width:99px;height:21px;border:1px solid #a8a8a8;background:#e1e1e1"></div>
<div class="a" style="left:652px;top:526px;width:1px;height:21px;background:#a0a0a0"></div>
<div class="a" style="left:635px;top:527px;width:1px;height:19px;background:#c4c4c4"></div>
<div class="t" style="left:556px;top:531px;font-size:11.5px;color:#000;letter-spacing:-0.55px;">Inherit</div>
<svg style="left:639px;top:534px" width="9" height="6"><path d="M0.5 0.5 L4.5 4.5 L8.5 0.5" fill="none" stroke="#3a3a3a" stroke-width="1.2"/></svg>
<div class="a" style="left:290px;top:548px;width:1px;height:21px;background:#a0a0a0"></div>
<div class="a" style="left:402px;top:548px;width:1px;height:21px;background:#a0a0a0"></div>
<div class="a" style="left:552px;top:548px;width:1px;height:21px;background:#a0a0a0"></div>
<div class="a" style="left:290px;top:569px;width:363px;height:1px;background:#a0a0a0"></div>
<div class="t" style="left:294px;top:553px;font-size:11.5px;color:#000;letter-spacing:-0.33px;">UnitsInStock</div>
<div class="t" style="left:406px;top:553px;font-size:11.5px;color:#000;letter-spacing:-0.4px;">Int16</div>
<div class="a" style="left:553px;top:548px;width:99px;height:21px;border:1px solid #a8a8a8;background:#e1e1e1"></div>
<div class="a" style="left:652px;top:548px;width:1px;height:21px;background:#a0a0a0"></div>
<div class="a" style="left:635px;top:549px;width:1px;height:19px;background:#c4c4c4"></div>
<div class="t" style="left:556px;top:553px;font-size:11.5px;color:#000;letter-spacing:-0.55px;">Inherit</div>
<svg style="left:639px;top:556px" width="9" height="6"><path d="M0.5 0.5 L4.5 4.5 L8.5 0.5" fill="none" stroke="#3a3a3a" stroke-width="1.2"/></svg>
<div class="a" style="left:290px;top:570px;width:1px;height:21px;background:#a0a0a0"></div>
<div class="a" style="left:402px;top:570px;width:1px;height:21px;background:#a0a0a0"></div>
<div class="a" style="left:552px;top:570px;width:1px;height:21px;background:#a0a0a0"></div>
<div class="a" style="left:290px;top:591px;width:363px;height:1px;background:#a0a0a0"></div>
<div class="t" style="left:294px;top:575px;font-size:11.5px;color:#000;letter-spacing:-0.33px;">UnitsOnOrder</div>
<div class="t" style="left:406px;top:575px;font-size:11.5px;color:#000;letter-spacing:-0.4px;">Int16</div>
<div class="a" style="left:553px;top:570px;width:99px;height:21px;border:1px solid #a8a8a8;background:#e1e1e1"></div>
<div class="a" style="left:652px;top:570px;width:1px;height:21px;background:#a0a0a0"></div>
<div class="a" style="left:635px;top:571px;width:1px;height:19px;background:#c4c4c4"></div>
<div class="t" style="left:556px;top:575px;font-size:11.5px;color:#000;letter-spacing:-0.55px;">Inherit</div>
<svg style="left:639px;top:578px" width="9" height="6"><path d="M0.5 0.5 L4.5 4.5 L8.5 0.5" fill="none" stroke="#3a3a3a" stroke-width="1.2"/></svg>
<div class="a" style="left:290px;top:592px;width:1px;height:21px;background:#a0a0a0"></div>
<div class="a" style="left:402px;top:592px;width:1px;height:21px;background:#a0a0a0"></div>
<div class="a" style="left:552px;top:592px;width:1px;height:21px;background:#a0a0a0"></div>
<div class="a" style="left:290px;top:613px;width:363px;height:1px;background:#a0a0a0"></div>
<div class="t" style="left:294px;top:597px;font-size:11.5px;color:#000;letter-spacing:-0.33px;">ReorderLevel</div>
<div class="t" style="left:406px;top:597px;font-size:11.5px;color:#000;letter-spacing:-0.4px;">Int16</div>
<div class="a" style="left:553px;top:592px;width:99px;height:21px;border:1px solid #a8a8a8;background:#e1e1e1"></div>
<div class="a" style="left:652px;top:592px;width:1px;height:21px;background:#a0a0a0"></div>
<div class="a" style="left:635px;top:593px;width:1px;height:19px;background:#c4c4c4"></div>
<div class="t" style="left:556px;top:597px;font-size:11.5px;color:#000;letter-spacing:-0.55px;">Inherit</div>
<svg style="left:639px;top:600px" width="9" height="6"><path d="M0.5 0.5 L4.5 4.5 L8.5 0.5" fill="none" stroke="#3a3a3a" stroke-width="1.2"/></svg>
<div class="a" style="left:290px;top:614px;width:1px;height:20px;background:#a0a0a0"></div>
<div class="a" style="left:402px;top:614px;width:1px;height:20px;background:#a0a0a0"></div>
<div class="a" style="left:552px;top:614px;width:1px;height:20px;background:#a0a0a0"></div>
<div class="t" style="left:294px;top:619px;font-size:11.5px;color:#000;letter-spacing:-0.33px;">Discontinued</div>
<div class="t" style="left:406px;top:619px;font-size:11.5px;color:#000;letter-spacing:-0.4px;">Boolean</div>
<div class="a" style="left:553px;top:614px;width:99px;height:20px;border:1px solid #a8a8a8;border-bottom:none;background:#e1e1e1"></div>
<div class="a" style="left:652px;top:614px;width:1px;height:20px;background:#a0a0a0"></div>
<div class="a" style="left:635px;top:615px;width:1px;height:19px;background:#c4c4c4"></div>
<div class="t" style="left:556px;top:619px;font-size:11.5px;color:#000;letter-spacing:-0.55px;">Inherit</div>
<svg style="left:639px;top:622px" width="9" height="6"><path d="M0.5 0.5 L4.5 4.5 L8.5 0.5" fill="none" stroke="#3a3a3a" stroke-width="1.2"/></svg>
<div class="a" style="left:653px;top:395px;width:17px;height:239px;background:#f0f0f0"></div>
<svg style="left:658px;top:400px" width="8" height="8"><path d="M0.8 6.5 L4 3 L7.2 6.5" fill="none" stroke="#505050" stroke-width="2.1"/></svg>
<div class="a" style="left:654px;top:412px;width:15px;height:202px;background:#cdcdcd"></div>
<svg style="left:658px;top:622px" width="8" height="8"><path d="M0.8 1.5 L4 5 L7.2 1.5" fill="none" stroke="#505050" stroke-width="2.1"/></svg>
<div class="a" style="left:598px;top:655px;width:73px;height:21px;border:1px solid #adadad;background:#e1e1e1"></div>
<div class="t" style="left:620px;top:659px;font-size:11.5px;color:#000;letter-spacing:0.15000000000000002px;">Close</div>
</body></html>
